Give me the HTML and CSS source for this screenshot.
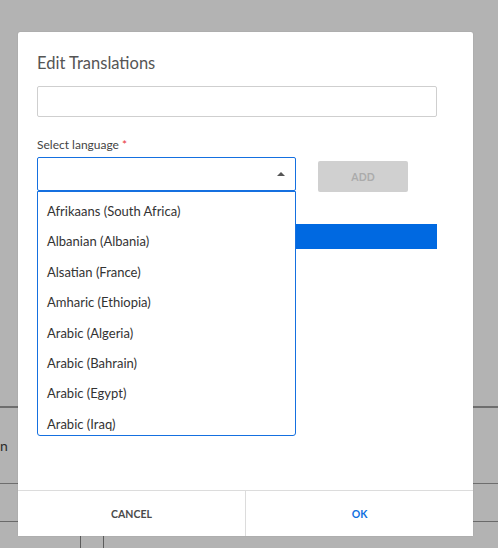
FILE: index.html
```html
<!DOCTYPE html>
<html>
<head>
    <link rel="stylesheet" href="styles.css">
</head>
<body>
    <div class="page">
        <div class="row row-top"></div>
        <div class="row row-mid"><span class="cut-text">n</span></div>
        <div class="row row-low"></div>
        <div class="row row-last">
            <span class="col-line first"></span>
            <span class="col-line second"></span>
        </div>
    </div>

    <div class="modal">
        <div class="modal-body">
            <h2 class="modal-title">Edit Translations</h2>
            <input type="text" class="text-field">

            <div class="field-label">Select language <span class="req">*</span></div>
            <div class="select-row">
                <div class="select-wrap">
                    <div class="select-box">
                        <span class="caret"></span>
                    </div>
                    <ul class="options">
                        <li>Afrikaans (South Africa)</li>
                        <li>Albanian (Albania)</li>
                        <li>Alsatian (France)</li>
                        <li>Amharic (Ethiopia)</li>
                        <li>Arabic (Algeria)</li>
                        <li>Arabic (Bahrain)</li>
                        <li>Arabic (Egypt)</li>
                        <li>Arabic (Iraq)</li>
                    </ul>
                </div>
                <button class="add-btn">ADD</button>
            </div>

            <div class="blue-bar"></div>
        </div>
        <div class="modal-footer">
            <button class="foot-btn cancel">CANCEL</button>
            <button class="foot-btn ok">OK</button>
        </div>
    </div>
</body>
</html>
```

FILE: styles.css
```css
html, body {
    margin: 0;
    height: 548px;
    overflow: hidden;
}
body {
    background-color: #b3b3b3;
    font-family: Lato, "Open Sans", sans-serif;
    position: relative;
}

/* page behind the overlay */
.page {
    padding-top: 406px;
}
.row {
    border-top: 1px solid #6e6e6e;
    box-sizing: border-box;
}
.row-mid {
    height: 76px;
    display: flex;
    align-items: center;
}
.row-low {
    height: 38px;
}
.row-last {
    height: 30px;
    display: flex;
    border-top-color: #6a6a6a;
}
.cut-text {
    font-size: 14px;
    color: #2c2c2c;
}
.col-line {
    display: block;
    width: 1px;
    height: 100%;
    background: #5c5c5c;
}
.col-line.first {
    margin-left: 80px;
}
.col-line.second {
    margin-left: 22px;
}

/* modal */
.modal {
    position: absolute;
    left: 18px;
    top: 32px;
    width: 455px;
    height: 504px;
    background: #fff;
    border-radius: 2px;
    box-shadow: 0 0 1px rgba(0,0,0,0.3);
    display: flex;
    flex-direction: column;
}
.modal-body {
    flex: 1;
    padding: 0 19px;
}
.modal-title {
    margin: 20px 0 0 0;
    font-size: 16.5px;
    line-height: 22px;
    font-weight: normal;
    color: #555;
}
.text-field {
    display: block;
    margin-top: 12px;
    width: 400px;
    height: 31px;
    box-sizing: border-box;
    border: 1px solid #cfcfcf;
    border-radius: 2px;
    padding: 0 8px;
    outline: none;
}
.field-label {
    margin-top: 20px;
    font-size: 12px;
    line-height: 16px;
    color: #444;
}
.req {
    color: #e8353b;
}
.select-row {
    margin-top: 4px;
    display: flex;
    align-items: flex-start;
}
.select-wrap {
    position: relative;
    width: 259px;
}
.select-box {
    height: 34px;
    box-sizing: border-box;
    border: 1px solid #1570e0;
    border-radius: 2px;
    position: relative;
}
.caret {
    position: absolute;
    right: 10px;
    top: 14px;
    width: 0;
    height: 0;
    border-left: 4px solid transparent;
    border-right: 4px solid transparent;
    border-bottom: 4px solid #555;
}
.options {
    position: absolute;
    left: 0;
    top: 34px;
    width: 259px;
    height: 245px;
    box-sizing: border-box;
    margin: 0;
    padding: 4px 0 0 0;
    list-style: none;
    background: #fff;
    border: 1px solid #1570e0;
    border-radius: 0 0 3px 3px;
    overflow: hidden;
    z-index: 2;
}
.options li {
    height: 30.4px;
    line-height: 30.4px;
    padding-left: 9px;
    font-size: 13px;
    color: #333;
}
.add-btn {
    margin-left: 22px;
    margin-top: 4px;
    width: 90px;
    height: 31px;
    border: none;
    border-radius: 2px;
    background: #d0d0d0;
    color: #ababab;
    font-family: Lato, sans-serif;
    font-weight: bold;
    font-size: 10.5px;
}
.blue-bar {
    margin-top: 32px;
    width: 400px;
    height: 25px;
    background: #0069e1;
}

.modal-footer {
    height: 45px;
    border-top: 1px solid #dcdcdc;
    display: flex;
}
.foot-btn {
    flex: 1;
    border: none;
    background: #fff;
    font-family: Lato, sans-serif;
    font-weight: bold;
    font-size: 10.5px;
    padding: 0;
}
.foot-btn.cancel {
    color: #4a4a4a;
    border-right: 1px solid #dcdcdc;
}
.foot-btn.ok {
    color: #1070e0;
}
```
